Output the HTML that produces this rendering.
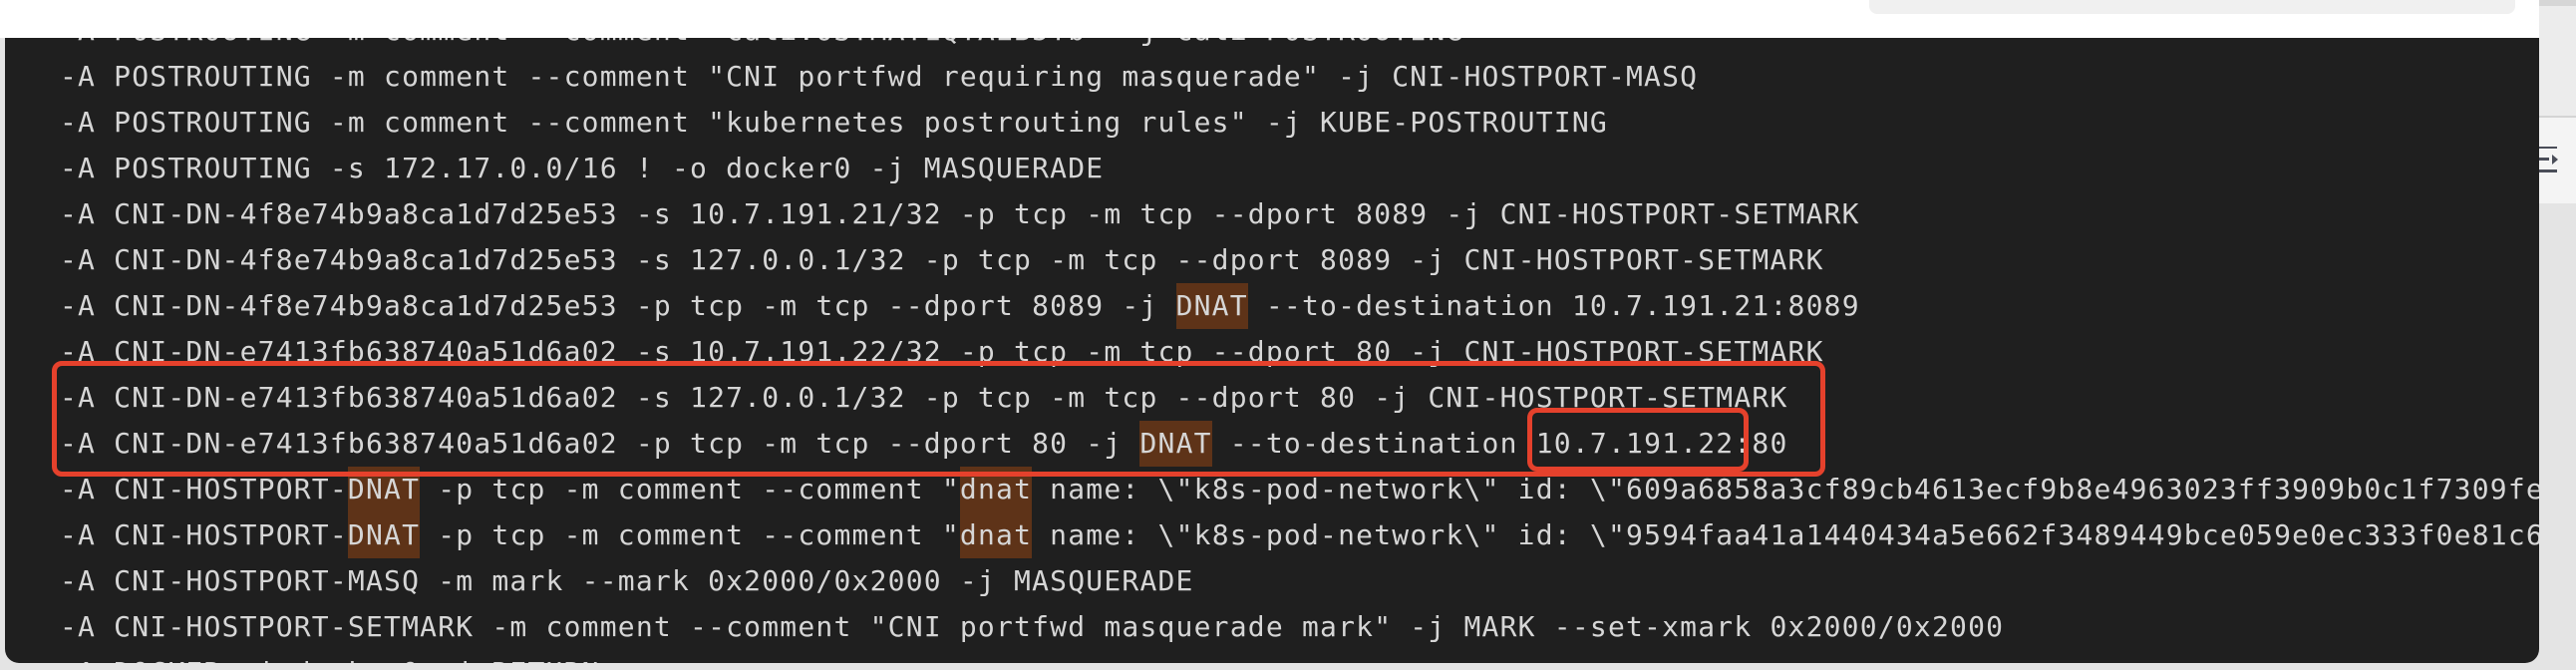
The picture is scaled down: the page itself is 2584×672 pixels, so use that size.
<!DOCTYPE html>
<html><head><meta charset="utf-8"><style>
html,body{margin:0;padding:0}
body{width:2584px;height:672px;position:relative;overflow:hidden;background:#e4e4e4;font-family:"DejaVu Sans Mono",monospace}
#top{position:absolute;left:0;top:0;width:2547px;height:38px;background:#fff}
#search{position:absolute;left:1875px;top:-12px;width:648px;height:26px;background:#f0f0f0;border-radius:8px}
#panel{position:absolute;left:5px;top:38px;width:2542px;height:627px;background:#1f1f1f;overflow:hidden;border-radius:0 0 14px 14px}
#code{position:absolute;left:55px;top:-30px;font-size:28px;letter-spacing:1.2px;line-height:46px;color:#d6d6d6;white-space:pre}
.l{height:46px}
.h{background:#5e3318;display:inline-block;height:46px;vertical-align:top}
.box{position:absolute;border:5px solid #e5412c;border-radius:10px;box-sizing:border-box}
#right{position:absolute;left:2547px;top:0;width:37px;height:672px;background:#e4e4e4}
</style></head><body>
<div id="top"><div id="search"></div></div>
<div id="panel"><div id="code"><div class="l">-A POSTROUTING -m comment --comment "cali:O3TMAT1QTAEB5Tb" -j cali-POSTROUTING</div><div class="l">-A POSTROUTING -m comment --comment "CNI portfwd requiring masquerade" -j CNI-HOSTPORT-MASQ</div><div class="l">-A POSTROUTING -m comment --comment "kubernetes postrouting rules" -j KUBE-POSTROUTING</div><div class="l">-A POSTROUTING -s 172.17.0.0/16 ! -o docker0 -j MASQUERADE</div><div class="l">-A CNI-DN-4f8e74b9a8ca1d7d25e53 -s 10.7.191.21/32 -p tcp -m tcp --dport 8089 -j CNI-HOSTPORT-SETMARK</div><div class="l">-A CNI-DN-4f8e74b9a8ca1d7d25e53 -s 127.0.0.1/32 -p tcp -m tcp --dport 8089 -j CNI-HOSTPORT-SETMARK</div><div class="l">-A CNI-DN-4f8e74b9a8ca1d7d25e53 -p tcp -m tcp --dport 8089 -j <span class="h">DNAT</span> --to-destination 10.7.191.21:8089</div><div class="l">-A CNI-DN-e7413fb638740a51d6a02 -s 10.7.191.22/32 -p tcp -m tcp --dport 80 -j CNI-HOSTPORT-SETMARK</div><div class="l">-A CNI-DN-e7413fb638740a51d6a02 -s 127.0.0.1/32 -p tcp -m tcp --dport 80 -j CNI-HOSTPORT-SETMARK</div><div class="l">-A CNI-DN-e7413fb638740a51d6a02 -p tcp -m tcp --dport 80 -j <span class="h">DNAT</span> --to-destination 10.7.191.22:80</div><div class="l">-A CNI-HOSTPORT-<span class="h">DNAT</span> -p tcp -m comment --comment "<span class="h">dnat</span> name: \"k8s-pod-network\" id: \"609a6858a3cf89cb4613ecf9b8e4963023ff3909b0c1f7309fe\"</div><div class="l">-A CNI-HOSTPORT-<span class="h">DNAT</span> -p tcp -m comment --comment "<span class="h">dnat</span> name: \"k8s-pod-network\" id: \"9594faa41a1440434a5e662f3489449bce059e0ec333f0e81c6\"</div><div class="l">-A CNI-HOSTPORT-MASQ -m mark --mark 0x2000/0x2000 -j MASQUERADE</div><div class="l">-A CNI-HOSTPORT-SETMARK -m comment --comment "CNI portfwd masquerade mark" -j MARK --set-xmark 0x2000/0x2000</div><div class="l">-A DOCKER -i docker0 -j RETURN</div></div></div>
<div class="box" style="left:52px;top:362px;width:1779px;height:116px"></div>
<div class="box" style="left:1532px;top:409px;width:222px;height:64px"></div>
<div id="right">
<div style="position:absolute;left:0;top:0;width:37px;height:6px;background:#d6d6d6"></div>
<div style="position:absolute;left:0;top:6px;width:37px;height:110px;background:#ececec"></div>
<div style="position:absolute;left:0;top:116px;width:37px;height:2px;background:#d4d4d4"></div>
<div style="position:absolute;left:0;top:118px;width:37px;height:86px;background:#f4f4f4"></div>
<div style="position:absolute;left:0;top:147px;width:18px;height:2px;background:#4a4d58"></div>
<div style="position:absolute;left:0;top:158px;width:10px;height:3px;background:#4a4d58"></div>
<div style="position:absolute;left:0;top:170px;width:18px;height:3px;background:#4a4d58"></div>
<div style="position:absolute;left:13px;top:155px;width:0;height:0;border-top:5px solid transparent;border-bottom:5px solid transparent;border-left:6px solid #4a4d58"></div>
</div>
</body></html>
